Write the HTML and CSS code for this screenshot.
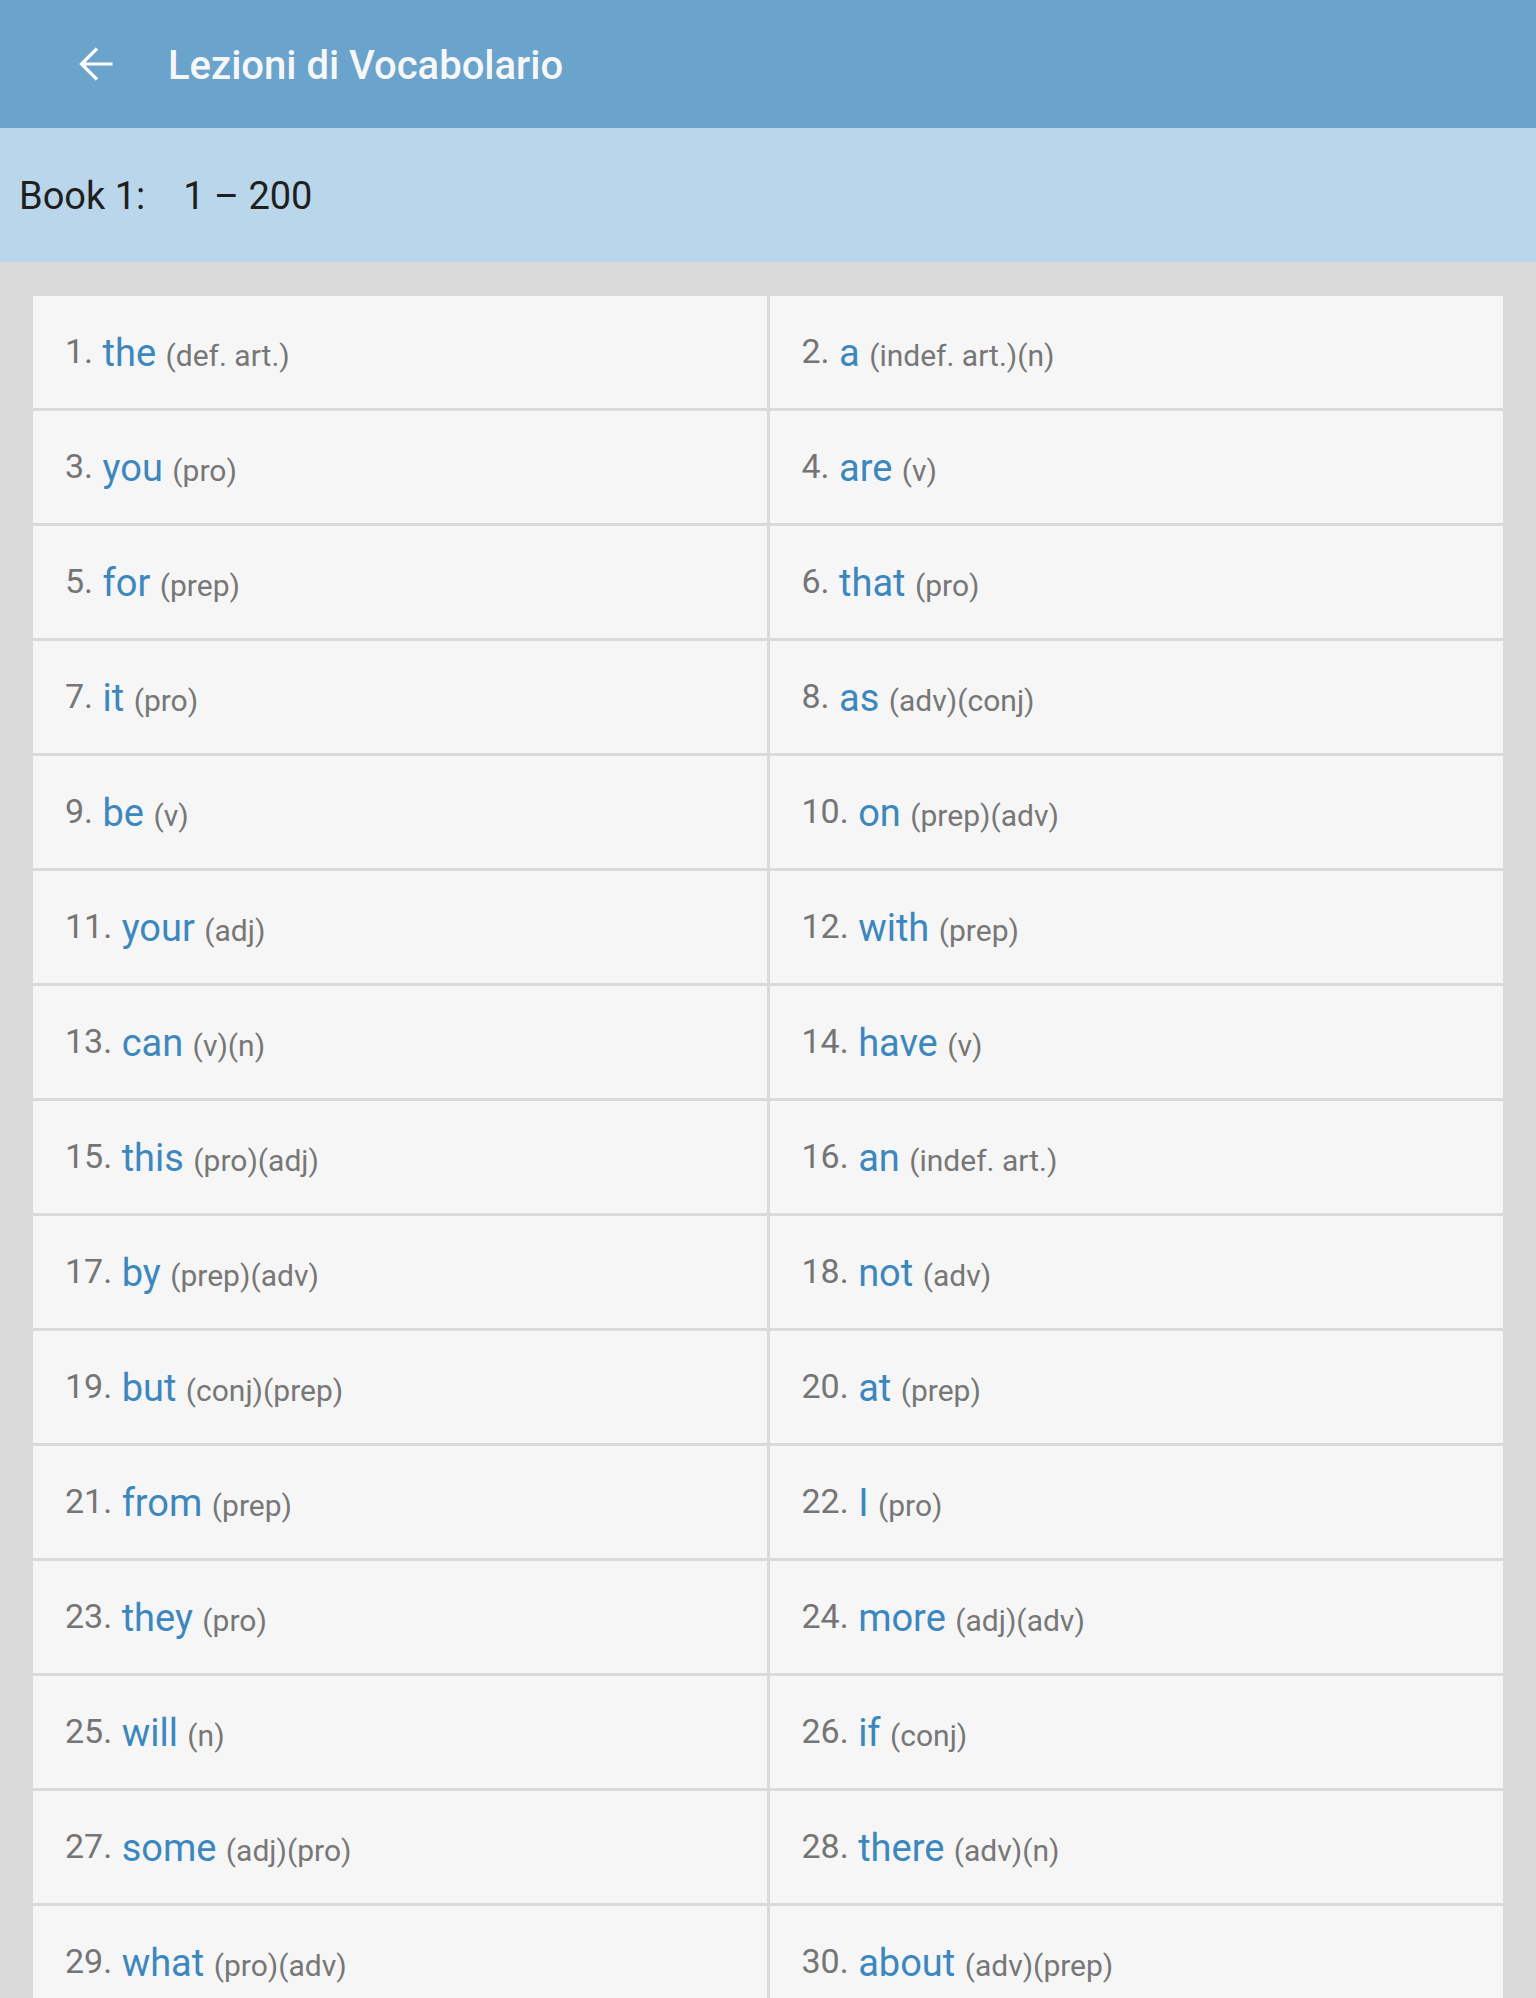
FILE: index.html
```html
<!DOCTYPE html>
<html lang="it">
<head>
<meta charset="utf-8">
<title>Lezioni di Vocabolario</title>
<link rel="stylesheet" href="styles.css">
</head>
<body>
<header class="toolbar">
  <button class="back" aria-label="Indietro">
    <svg viewBox="0 0 48 48" width="48" height="48" aria-hidden="true">
      <path d="M9.5 24H40.5M25 8.5L9.5 24L25 39.5" fill="none" stroke="#ffffff" stroke-width="3.2"/>
    </svg>
  </button>
  <h1 class="title">Lezioni di Vocabolario</h1>
</header>
<div class="subheader"><span>Book 1:</span><span class="range">1 – 200</span></div>
<main class="content">
  <div class="grid">
    <div class="cell"><span class="num">1.</span> <span class="word">the</span> <span class="pos">(def. art.)</span></div>
    <div class="cell"><span class="num">2.</span> <span class="word">a</span> <span class="pos">(indef. art.)(n)</span></div>
    <div class="cell"><span class="num">3.</span> <span class="word">you</span> <span class="pos">(pro)</span></div>
    <div class="cell"><span class="num">4.</span> <span class="word">are</span> <span class="pos">(v)</span></div>
    <div class="cell"><span class="num">5.</span> <span class="word">for</span> <span class="pos">(prep)</span></div>
    <div class="cell"><span class="num">6.</span> <span class="word">that</span> <span class="pos">(pro)</span></div>
    <div class="cell"><span class="num">7.</span> <span class="word">it</span> <span class="pos">(pro)</span></div>
    <div class="cell"><span class="num">8.</span> <span class="word">as</span> <span class="pos">(adv)(conj)</span></div>
    <div class="cell"><span class="num">9.</span> <span class="word">be</span> <span class="pos">(v)</span></div>
    <div class="cell"><span class="num">10.</span> <span class="word">on</span> <span class="pos">(prep)(adv)</span></div>
    <div class="cell"><span class="num">11.</span> <span class="word">your</span> <span class="pos">(adj)</span></div>
    <div class="cell"><span class="num">12.</span> <span class="word">with</span> <span class="pos">(prep)</span></div>
    <div class="cell"><span class="num">13.</span> <span class="word">can</span> <span class="pos">(v)(n)</span></div>
    <div class="cell"><span class="num">14.</span> <span class="word">have</span> <span class="pos">(v)</span></div>
    <div class="cell"><span class="num">15.</span> <span class="word">this</span> <span class="pos">(pro)(adj)</span></div>
    <div class="cell"><span class="num">16.</span> <span class="word">an</span> <span class="pos">(indef. art.)</span></div>
    <div class="cell"><span class="num">17.</span> <span class="word">by</span> <span class="pos">(prep)(adv)</span></div>
    <div class="cell"><span class="num">18.</span> <span class="word">not</span> <span class="pos">(adv)</span></div>
    <div class="cell"><span class="num">19.</span> <span class="word">but</span> <span class="pos">(conj)(prep)</span></div>
    <div class="cell"><span class="num">20.</span> <span class="word">at</span> <span class="pos">(prep)</span></div>
    <div class="cell"><span class="num">21.</span> <span class="word">from</span> <span class="pos">(prep)</span></div>
    <div class="cell"><span class="num">22.</span> <span class="word">I</span> <span class="pos">(pro)</span></div>
    <div class="cell"><span class="num">23.</span> <span class="word">they</span> <span class="pos">(pro)</span></div>
    <div class="cell"><span class="num">24.</span> <span class="word">more</span> <span class="pos">(adj)(adv)</span></div>
    <div class="cell"><span class="num">25.</span> <span class="word">will</span> <span class="pos">(n)</span></div>
    <div class="cell"><span class="num">26.</span> <span class="word">if</span> <span class="pos">(conj)</span></div>
    <div class="cell"><span class="num">27.</span> <span class="word">some</span> <span class="pos">(adj)(pro)</span></div>
    <div class="cell"><span class="num">28.</span> <span class="word">there</span> <span class="pos">(adv)(n)</span></div>
    <div class="cell"><span class="num">29.</span> <span class="word">what</span> <span class="pos">(pro)(adv)</span></div>
    <div class="cell"><span class="num">30.</span> <span class="word">about</span> <span class="pos">(adv)(prep)</span></div>
  </div>
</main>
</body>
</html>
```
FILE: styles.css
```css
html, body {
  margin: 0;
  padding: 0;
}
body {
  background: #dadada;
  font-family: Roboto, "Noto Sans", "Liberation Sans", sans-serif;
  height: 1998px;
  overflow: hidden;
}
.toolbar {
  height: 128px;
  background: #6aa3cc;
  display: flex;
  align-items: center;
  padding-left: 72px;
  box-sizing: border-box;
}
.back {
  width: 48px;
  height: 48px;
  padding: 0;
  margin: 0;
  border: 0;
  background: transparent;
  display: flex;
}
.title {
  margin: 4px 0 0 48px;
  font-size: 40px;
  font-weight: 500;
  color: #f7f7f7;
  line-height: 1;
}
.subheader {
  height: 134px;
  background: #bad6ea;
  display: flex;
  align-items: center;
  padding-left: 19px;
  padding-top: 2px;
  box-sizing: border-box;
  font-size: 38px;
  color: #1f1f1f;
}
.range {
  margin-left: 38px;
}
.content {
  padding: 34px 33px 0 33px;
}
.grid {
  display: grid;
  grid-template-columns: 1fr 1fr;
  gap: 3px;
}
.cell {
  background: #f6f6f6;
  height: 112px;
  box-sizing: border-box;
  padding: 33px 0 0 32px;
  font-size: 38px;
  line-height: 44px;
  white-space: nowrap;
}
.num {
  font-size: 34px;
  color: #757575;
  vertical-align: 3px;
}
.word {
  font-size: 38px;
  color: #3d87bf;
}
.pos {
  font-size: 30px;
  color: #777777;
}
```
